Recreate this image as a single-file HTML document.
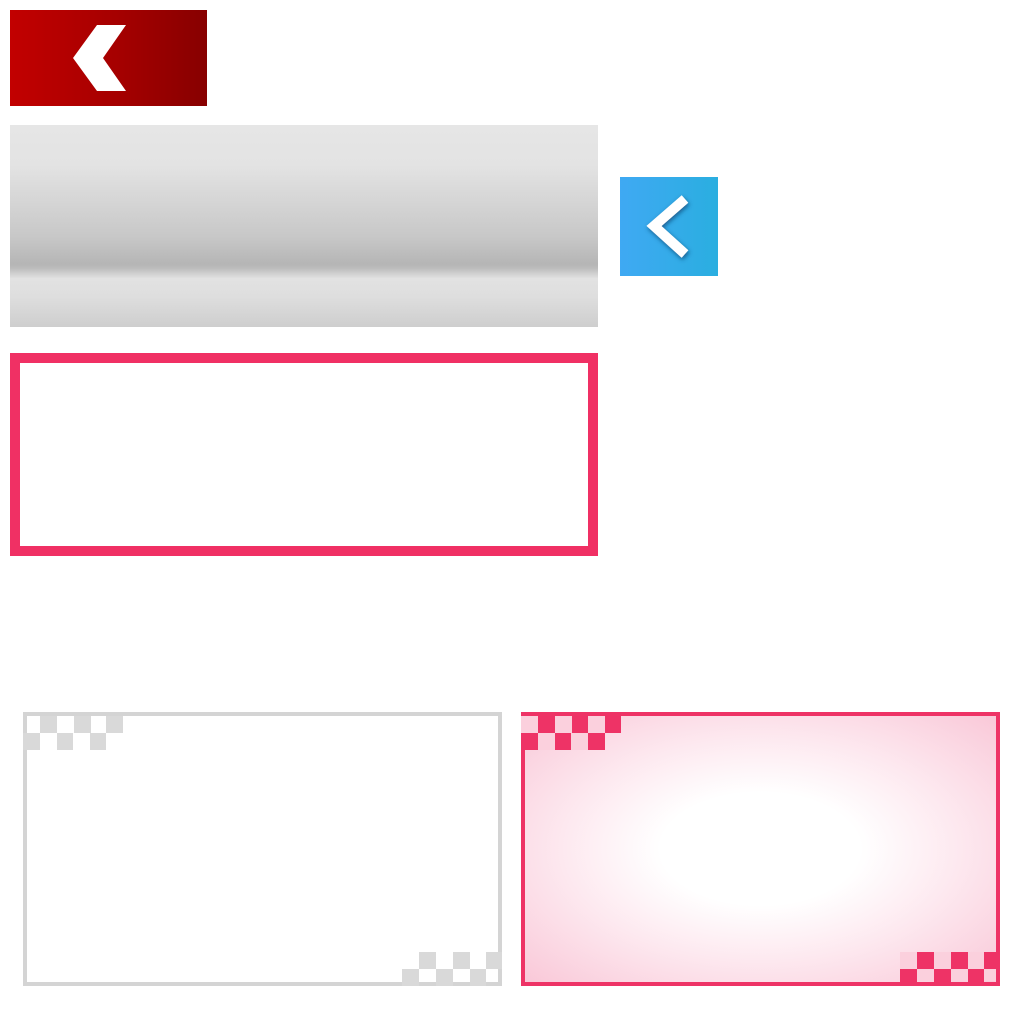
<!DOCTYPE html>
<html><head><style>
body{margin:0;width:1024px;height:1024px;background:#fff;position:relative;overflow:hidden}
.a{position:absolute;box-sizing:border-box}
</style></head><body>
<div class="a" style="left:10px;top:10px;width:197px;height:96px;background:linear-gradient(to right,#c20000,#a50000 55%,#870000)"></div>
<svg class="a" style="left:0;top:0" width="220" height="120"><polygon points="97,25 126,25 103,58 126,91 97,91 73,58" fill="#fff"/></svg>
<div class="a" style="left:10px;top:125px;width:588px;height:202px;background:linear-gradient(to bottom,#e6e6e6 0%,#e3e3e3 20%,#c8c8c8 55%,#b5b5b5 69%,#bdbdbd 71%,#e2e2e2 76%,#dedede 85%,#cecece 100%)"></div>
<div class="a" style="left:620px;top:177px;width:98px;height:99px;background:linear-gradient(to right,#3fa9f3,#2aaee0)"></div>
<svg class="a" style="left:620px;top:177px" width="98" height="99"><defs><filter id="s" x="-50%" y="-50%" width="200%" height="200%"><feDropShadow dx="1" dy="2" stdDeviation="2.5" flood-color="#08406e" flood-opacity="0.75"/></filter></defs><polyline points="65,22 34,49 65,77" fill="none" stroke="#fff" stroke-width="10" filter="url(#s)"/></svg>
<div class="a" style="left:10px;top:353px;width:588px;height:203px;border:10px solid #f03064"></div>

<div class="a" style="left:23px;top:712px;width:479px;height:274px;border:4px solid #d4d4d4;background:#fff"></div>
<svg class="a" style="left:0;top:700px" width="1024" height="300">
<g fill="#d9d9d9">
<rect x="40" y="16" width="17" height="17"/><rect x="74" y="16" width="17" height="17"/><rect x="106" y="16" width="17" height="17"/>
<rect x="23" y="33" width="17" height="17"/><rect x="57" y="33" width="16" height="17"/><rect x="90" y="33" width="16" height="17"/>
<rect x="419" y="252" width="17" height="17"/><rect x="453" y="252" width="17" height="17"/><rect x="486" y="252" width="16" height="17"/>
<rect x="402" y="269" width="17" height="17"/><rect x="436" y="269" width="17" height="17"/><rect x="470" y="269" width="16" height="17"/>
</g>
</svg>

<div class="a" style="left:521px;top:712px;width:479px;height:274px;border:4px solid #ee3366;background:radial-gradient(ellipse at 50% 50%,#fff 30%,#fde8ef 60%,#f9c8d8 100%)"></div>
<svg class="a" style="left:0;top:700px" width="1024" height="300">
<g fill="#fbd0dd">
<rect x="521" y="16" width="17" height="17"/><rect x="555" y="16" width="17" height="17"/><rect x="588" y="16" width="17" height="17"/>
<rect x="538" y="33" width="17" height="17"/><rect x="571" y="33" width="17" height="17"/>
<rect x="900" y="252" width="17" height="17"/><rect x="934" y="252" width="17" height="17"/><rect x="968" y="252" width="16" height="17"/>
<rect x="917" y="269" width="17" height="12"/><rect x="951" y="269" width="17" height="12"/><rect x="984" y="269" width="12" height="12"/>
</g>
<g fill="#ee3366">
<rect x="538" y="16" width="17" height="17"/><rect x="572" y="16" width="16" height="17"/><rect x="605" y="16" width="16" height="17"/>
<rect x="521" y="33" width="17" height="17"/><rect x="555" y="33" width="16" height="17"/><rect x="588" y="33" width="17" height="17"/>
<rect x="917" y="252" width="17" height="17"/><rect x="951" y="252" width="17" height="17"/><rect x="984" y="252" width="16" height="17"/>
<rect x="900" y="269" width="17" height="17"/><rect x="934" y="269" width="17" height="17"/><rect x="968" y="269" width="16" height="17"/>
</g>
</svg>
</body></html>
